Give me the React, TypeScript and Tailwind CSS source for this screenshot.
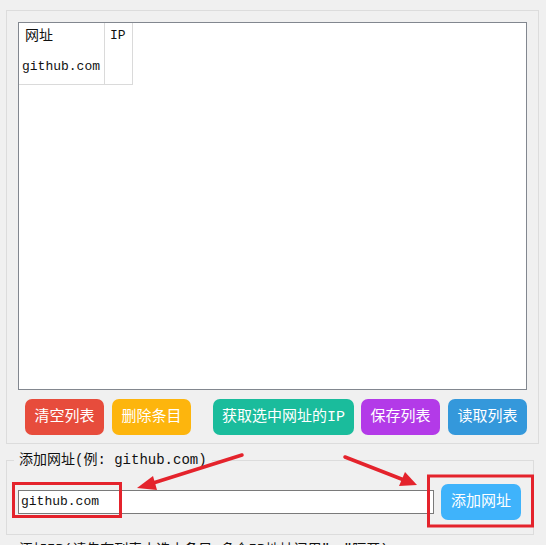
import React from "react";

const FONT = { fontFamily: '"Liberation Mono", "Noto Sans CJK SC", monospace' };

function Btn({ color, w, children, extra = "" }: { color: string; w: string; children: React.ReactNode; extra?: string }) {
  return (
    <button
      className={`h-[36px] ${w} ${color} ${extra} rounded-[7px] text-white text-[15px] leading-none flex items-center justify-center`}
    >
      {children}
    </button>
  );
}

export default function App() {
  return (
    <div className="relative w-[546px] h-[545px] overflow-hidden bg-[#f0f0f0] text-[#111]" style={FONT}>
      <div className="pt-[10px] pl-[6px] pr-[7px]">
        {/* group box 1 */}
        <div className="border border-[#dcdcdc] h-[434px] pt-[11px] pl-[11px] pr-[11px]">
          <div className="h-[368px] border border-[#82878f] bg-white">
            <div className="flex w-[115px]">
              <div className="w-[86px] border-r border-[#dadada]">
                <div className="h-[26px] pl-[6px] flex items-center text-[14px]">网址</div>
                <div className="h-[36px] pl-[3px] flex items-center text-[13px] border-b border-[#dadada]">github.com</div>
              </div>
              <div className="w-[28px] border-r border-[#dadada]">
                <div className="h-[26px] pl-[5px] flex items-center text-[13px]">IP</div>
                <div className="h-[36px] border-b border-[#dadada]"></div>
              </div>
            </div>
          </div>
          <div className="flex mt-[9px] pl-[7px]">
            <Btn color="bg-[#e74c3c]" w="w-[79px]">清空列表</Btn>
            <Btn color="bg-[#fdb50d]" w="w-[79px]" extra="ml-[8px]">删除条目</Btn>
            <Btn color="bg-[#1abc9c]" w="w-[141px]" extra="ml-[22px]">获取选中网址的IP</Btn>
            <Btn color="bg-[#b33ae8]" w="w-[79px]" extra="ml-[7px]">保存列表</Btn>
            <Btn color="bg-[#3498db]" w="w-[79px]" extra="ml-[8px]">读取列表</Btn>
          </div>
        </div>
      </div>

      {/* group box 2 */}
      <div className="mt-[16px] ml-[6px] w-[528px]">
        <div className="relative border border-[#dcdcdc] h-[75px] pl-[11px] pt-[23px] flex items-start">
          <span className="absolute left-[7px] top-[-9px] px-[5px] bg-[#f0f0f0] text-[14px] leading-[16px]">
            添加网址(例: github.com)
          </span>
          <div className="mt-[6px] w-[416px] h-[24px] border border-[#7a7a7a] bg-white flex items-center pl-[2px] text-[13px]">
            github.com
          </div>
          <button className="ml-[7px] w-[80px] h-[36px] rounded-[7px] bg-[#3fb3fb] text-white text-[15px] leading-none flex items-center justify-center">
            添加网址
          </button>
        </div>
      </div>

      <div className="mt-[7px] ml-[19px] text-[14px] leading-[16px] whitespace-nowrap">
        添加IP(请先在列表中选中条目,多个IP地址间用"，"隔开)
      </div>

      {/* annotations */}
      <svg className="absolute left-0 top-0 pointer-events-none" width="546" height="545">
        <rect x="13.5" y="483.5" width="107" height="33" fill="none" stroke="#e4232c" strokeWidth="3" />
        <rect x="428.5" y="476" width="104" height="50" fill="none" stroke="#e4232c" strokeWidth="3" />
        <line x1="242" y1="455" x2="150" y2="484" stroke="#e4232c" strokeWidth="3.5" strokeLinecap="round" />
        <polygon points="137,488 153,476 157,490" fill="#e4232c" />
        <line x1="345" y1="457" x2="404" y2="480" stroke="#e4232c" strokeWidth="3.5" strokeLinecap="round" />
        <polygon points="417,485 399,486 405,472" fill="#e4232c" />
      </svg>
    </div>
  );
}
